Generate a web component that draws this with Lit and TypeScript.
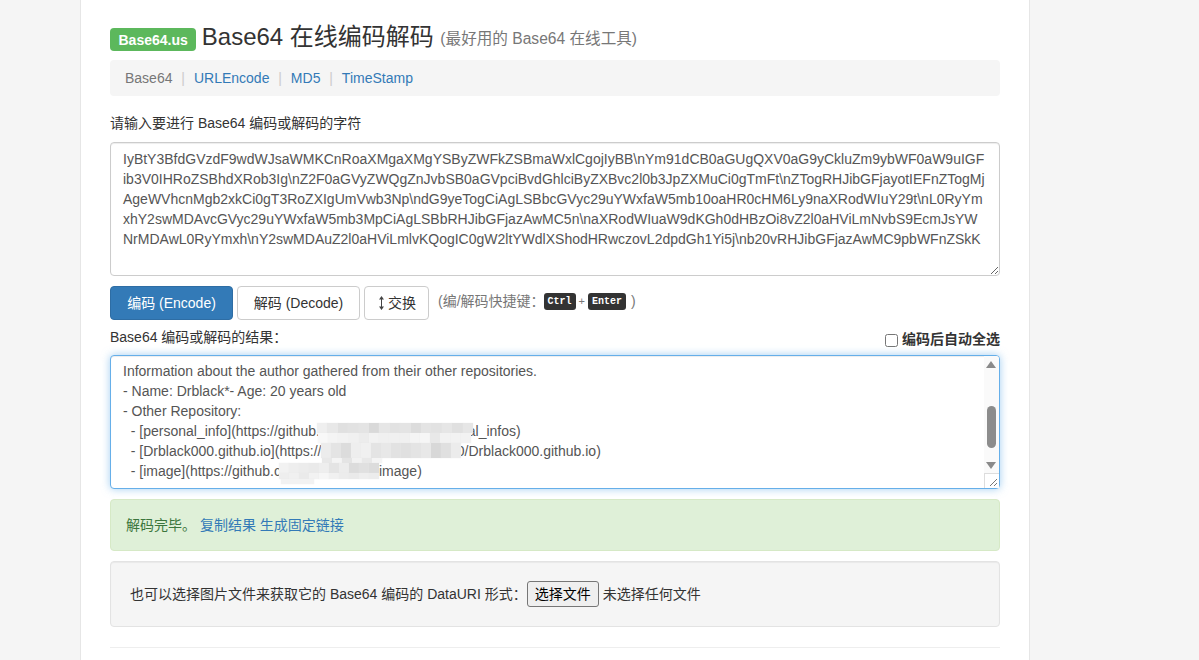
import { LitElement, html, css } from "lit";
import { customElement } from "lit/decorators.js";

// Mosaic that hides part of the URLs: [left, top, cell width, cell height, grey levels]
const MOSAIC: [number, number, number, number, string[]][] = [
  [317, 423, 10.4, 10, ["ef", "e8", "e0", "e2", "e4", "d9", "e6", "e2", "e4", "dc", "e4", "e2", "e6", "e0", "e6"]],
  [318, 433, 10.2, 10, ["f8", "f4", "f2", "f0", "ec", "f2", "f0", "f0", "f0", "f4", "f6", "e8", "f2", "f2", "f2"]],
  [321, 443, 10, 15, ["ec", "e4", "dc", "ee", "f0", "e4", "e8", "e2", "e0", "e4", "e8", "d8", "e0", "ec"]],
  [322, 458, 10, 5, ["e8", "f4", "e4", "f2", "e8", "f4"]],
  [279, 463, 10, 10, ["f2", "ee", "ec", "ea", "ee", "e4", "ec", "dc", "e0", "dc"]],
  [279, 473, 10, 6, ["ee", "f0", "ea", "f2", "f6", "f0", "ec", "ea", "ee", "ec"]],
  [281, 479, 33, 5, ["f2"]],
];

@customElement("app-root")
export class AppRoot extends LitElement {
  static styles = css`
    :host {
      display: block;
      height: 660px;
      overflow: hidden;
      background: #f5f5f5;
      font-family: "Liberation Sans", "Noto Sans CJK SC", sans-serif;
      font-size: 14px;
      line-height: 20px;
      color: #333;
    }
    * { box-sizing: border-box; }
    .page {
      width: 950px;
      height: 660px;
      margin-left: 80px;
      padding: 0 29px;
      background: #fff;
      border: solid #e6e6e6;
      border-width: 0 1px;
      overflow: hidden;
    }
    h1 {
      margin: 0;
      padding-top: 20px;
      height: 54px;
      font-size: 24px;
      line-height: 34px;
      font-weight: 400;
      display: flex;
      align-items: center;
      white-space: pre;
    }
    .badge {
      background: #5cb85c;
      color: #fff;
      font-size: 14px;
      font-weight: 700;
      line-height: 14px;
      padding: 5px 8.5px 4px;
      border-radius: 4px;
      margin-right: 5.5px;
      margin-top: 4px;
    }
    h1 small {
      font-size: 15.6px;
      line-height: 20px;
      color: #777;
      margin-left: 6.5px;
      margin-top: 4px;
    }
    .crumb {
      margin-top: 6px;
      height: 36px;
      background: #f5f5f5;
      border-radius: 4px;
      padding: 8px 15px;
      display: flex;
    }
    .crumb span.cur { color: #777; }
    .crumb i { font-style: normal; color: #ccc; padding: 0 9px 0 8.8px; }
    a { color: #337ab7; text-decoration: none; }
    .lbl { margin-top: 17px; height: 20px; }
    textarea {
      display: block;
      width: 100%;
      margin: 0;
      font: inherit;
      color: #555;
      background: #fff;
      border: 1px solid #ccc;
      border-radius: 4px;
      box-shadow: inset 0 1px 1px rgba(0, 0, 0, 0.075);
      padding: 6px 12px;
      resize: vertical;
      outline: none;
      overflow: hidden;
    }
    .src { margin-top: 9px; height: 134px; }
    .actions { margin-top: 10px; display: flex; align-items: center; height: 34px; }
    .btn {
      height: 34px;
      padding: 6px 12px;
      border: 1px solid #ccc;
      border-radius: 4px;
      background: #fff;
      color: #333;
      font: inherit;
      margin-right: 4px;
      display: inline-flex;
      align-items: center;
      justify-content: center;
      white-space: pre;
    }
    .btn.wide { width: 123px; padding: 6px 0; }
    .btn.primary { background: #337ab7; border-color: #2e6da4; color: #fff; }
    .btn svg { display: block; margin-right: 2px; }
    .hint { color: #777; margin-left: 5px; display: flex; align-items: center; white-space: pre; margin-top: -4px; }
    .hint b { font-weight: 400; font-size: 11px; }
    kbd {
      font-family: "Liberation Mono", monospace;
      font-size: 10px;
      font-weight: 700;
      line-height: 15px;
      background: #333;
      color: #fff;
      border-radius: 3px;
      padding: 1px 4px;
      margin: 0 3px;
    }
    kbd.first { margin-left: -1px; }
    kbd.last { margin-right: 1px; }
    .res-head {
      margin-top: 7px;
      height: 28px;
      display: flex;
      justify-content: space-between;
    }
    .auto { display: flex; align-items: flex-start; font-weight: 700; padding-top: 2px; }
    .auto span { display: block; width: 13px; height: 13px; border: 1px solid #767676; border-radius: 2.5px; margin: 5px 4px 0 0; background: #fff; }
    .out-wrap { position: relative; height: 134px; }
    .out {
      height: 134px;
      border-color: #66afe9;
      padding-top: 5px;
      box-shadow: inset 0 1px 1px rgba(0, 0, 0, 0.075), 0 0 8px rgba(102, 175, 233, 0.6);
    }
    .sb {
      position: absolute;
      top: 1px;
      right: 1px;
      bottom: 1px;
      width: 15px;
      background: #fafafa;
      border-radius: 0 3px 3px 0;
    }
    .sb .up, .sb .down {
      position: absolute;
      left: 2px;
      width: 0;
      height: 0;
      border-left: 5px solid transparent;
      border-right: 5px solid transparent;
    }
    .sb .up { top: 5px; border-bottom: 7px solid #8a8a8a; }
    .sb .down { top: 106px; border-top: 7px solid #8a8a8a; }
    .sb .thumb { position: absolute; left: 3px; top: 50px; width: 9px; height: 42px; background: #8c8c8c; border-radius: 4.5px; }
    .sb .corner {
      position: absolute;
      right: 0;
      bottom: 0;
      width: 15px;
      height: 15px;
      background: #fff;
      border: 1px solid #ddd;
      border-width: 1px 0 0 1px;
    }
    .sb svg { position: absolute; right: 1px; bottom: 1px; display: block; }
    .cell { position: absolute; box-shadow: 0 0 1px 0 rgba(235, 235, 235, 0.8); }
    .ok {
      margin-top: 10px;
      height: 52px;
      background: #dff0d8;
      border: 1px solid #d6e9c6;
      border-radius: 4px;
      padding: 15px;
      color: #3c763d;
      white-space: pre;
    }
    .well {
      margin-top: 10px;
      height: 66px;
      background: #f5f5f5;
      border: 1px solid #e3e3e3;
      border-radius: 4px;
      box-shadow: inset 0 1px 1px rgba(0, 0, 0, 0.05);
      padding: 0 19px;
      display: flex;
      align-items: center;
      white-space: pre;
    }
    .well button {
      font: inherit;
      height: 26px;
      margin: 0 4px 0 0;
      padding: 0 7px;
      background: #efefef;
      border: 1px solid #767676;
      border-radius: 3px;
      color: #000;
    }
    .hr { margin-top: 20px; border-top: 1px solid #eee; }
  `;

  render() {
    return html`<div class="page">
      <h1><span class="badge">Base64.us</span>Base64 在线编码解码<small>(最好用的 Base64 在线工具)</small></h1>
      <div class="crumb">
        <span class="cur">Base64</span><i>|</i><a href="#">URLEncode</a><i>|</i><a href="#">MD5</a><i>|</i><a href="#">TimeStamp</a>
      </div>
      <div class="lbl">请输入要进行 Base64 编码或解码的字符</div>
      <textarea class="src" spellcheck="false">IyBtY3BfdGVzdF9wdWJsaWMKCnRoaXMgaXMgYSByZWFkZSBmaWxlCgojIyBB\\nYm91dCB0aGUgQXV0aG9yCkluZm9ybWF0aW9uIGFib3V0IHRoZSBhdXRob3Ig\\nZ2F0aGVyZWQgZnJvbSB0aGVpciBvdGhlciByZXBvc2l0b3JpZXMuCi0gTmFt\\nZTogRHJibGFjayotIEFnZTogMjAgeWVhcnMgb2xkCi0gT3RoZXIgUmVwb3Np\\ndG9yeTogCiAgLSBbcGVyc29uYWxfaW5mb10oaHR0cHM6Ly9naXRodWIuY29t\\nL0RyYmxhY2swMDAvcGVyc29uYWxfaW5mb3MpCiAgLSBbRHJibGFjazAwMC5n\\naXRodWIuaW9dKGh0dHBzOi8vZ2l0aHViLmNvbS9EcmJsYWNrMDAwL0RyYmxh\\nY2swMDAuZ2l0aHViLmlvKQogIC0gW2ltYWdlXShodHRwczovL2dpdGh1Yi5j\\nb20vRHJibGFjazAwMC9pbWFnZSkK</textarea>
      <div class="actions">
        <button class="btn primary wide">编码 (Encode)</button>
        <button class="btn wide">解码 (Decode)</button>
        <button class="btn"><svg width="9" height="14" viewBox="0 0 9 14" fill="#444" stroke="none"><path d="M4 2h1v10H4z"/><path d="M4.5 0 7 3.5H2zM4.5 14 7 10.5H2z"/></svg>交换</button>
        <span class="hint">(编/解码快捷键：<kbd class="first">Ctrl</kbd><b>+</b><kbd class="last">Enter</kbd> )</span>
      </div>
      <div class="res-head">
        <span>Base64 编码或解码的结果：</span>
        <label class="auto"><span></span>编码后自动全选</label>
      </div>
      <div class="out-wrap">
        <textarea class="out" spellcheck="false">Information about the author gathered from their other repositories.
- Name: Drblack*- Age: 20 years old
- Other Repository:
  - [personal_info](https://github.com/Drblack000/personal_infos)
  - [Drblack000.github.io](https://github.com/Drblack000/Drblack000.github.io)
  - [image](https://github.com/Drblack000/image)</textarea>
        <div class="sb">
          <div class="up"></div><div class="thumb"></div><div class="down"></div>
          <div class="corner"></div>
          <svg width="10" height="10" viewBox="0 0 10 10" fill="none" stroke="#777" stroke-width="1"><path d="M2 9 9 2M6 9 9 6"/></svg>
        </div>
      </div>
      <div class="ok">解码完毕。 <a href="#">复制结果</a> <a href="#">生成固定链接</a></div>
      <div class="well">也可以选择图片文件来获取它的 Base64 编码的 DataURI 形式：<button>选择文件</button>未选择任何文件</div>
      <div class="hr"></div>
      ${MOSAIC.map(([x, y, w, h, cells]) =>
        cells.map(
          (g, i) =>
            html`<div class="cell" style="left:${x + i * w}px;top:${y}px;width:${w}px;height:${h}px;background:#${g}${g}${g}"></div>`
        )
      )}
    </div>`;
  }
}
